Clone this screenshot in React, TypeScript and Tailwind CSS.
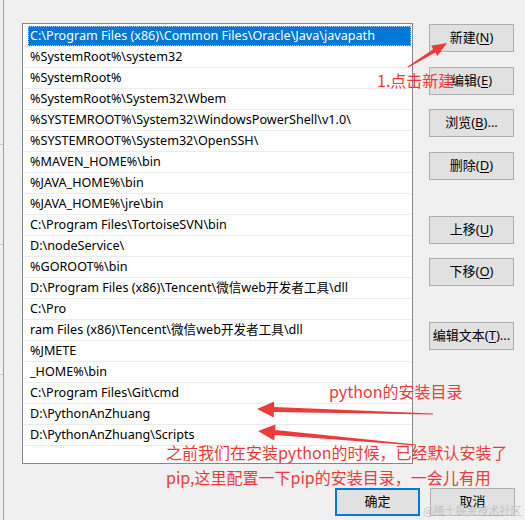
import React from "react";

const paths = [
  "C:\\Program Files (x86)\\Common Files\\Oracle\\Java\\javapath",
  "%SystemRoot%\\system32",
  "%SystemRoot%",
  "%SystemRoot%\\System32\\Wbem",
  "%SYSTEMROOT%\\System32\\WindowsPowerShell\\v1.0\\",
  "%SYSTEMROOT%\\System32\\OpenSSH\\",
  "%MAVEN_HOME%\\bin",
  "%JAVA_HOME%\\bin",
  "%JAVA_HOME%\\jre\\bin",
  "C:\\Program Files\\TortoiseSVN\\bin",
  "D:\\nodeService\\",
  "%GOROOT%\\bin",
  "D:\\Program Files (x86)\\Tencent\\微信web开发者工具\\dll",
  "C:\\Pro",
  "ram Files (x86)\\Tencent\\微信web开发者工具\\dll",
  "%JMETE",
  "_HOME%\\bin",
  "C:\\Program Files\\Git\\cmd",
  "D:\\PythonAnZhuang",
  "D:\\PythonAnZhuang\\Scripts",
];

type Btn = { label: string; key: string; tail?: string; mt: string };

const buttons: Btn[] = [
  { label: "新建", key: "N", mt: "mt-[1px]" },
  { label: "编辑", key: "E", mt: "mt-[15px]" },
  { label: "浏览", key: "B", tail: "...", mt: "mt-[14px]" },
  { label: "删除", key: "D", mt: "mt-[15px]" },
  { label: "上移", key: "U", mt: "mt-[36px]" },
  { label: "下移", key: "O", mt: "mt-[14px]" },
  { label: "编辑文本", key: "T", tail: "...", mt: "mt-[36px]" },
];

// tapered arrow polygon from tail to tip
function arrow(
  tx: number, ty: number, px: number, py: number,
  w0: number, w1: number, len: number, half: number
) {
  const dx = px - tx;
  const dy = py - ty;
  const l = Math.hypot(dx, dy);
  const ux = dx / l;
  const uy = dy / l;
  const nx = -uy;
  const ny = ux;
  const bx = px - ux * len;
  const by = py - uy * len;
  const pts = [
    [tx + (nx * w0) / 2, ty + (ny * w0) / 2],
    [bx + (nx * w1) / 2, by + (ny * w1) / 2],
    [bx + nx * half, by + ny * half],
    [px, py],
    [bx - nx * half, by - ny * half],
    [bx - (nx * w1) / 2, by - (ny * w1) / 2],
    [tx - (nx * w0) / 2, ty - (ny * w0) / 2],
  ];
  return pts.map((p) => p.map((v) => v.toFixed(1)).join(",")).join(" ");
}

const Button = ({ b }: { b: Btn }) => (
  <button className={`${b.mt} h-[28px] w-[85px] border border-[#adadad] bg-[#e1e1e1] text-[13px] text-black flex items-center justify-center`}>
    {b.label}(<span className="underline underline-offset-2">{b.key}</span>){b.tail}
  </button>
);

const App = () => {
  return (
    <div
      className="relative w-[525px] h-[520px] overflow-hidden bg-[#f0f0f0] flex"
      style={{ fontFamily: '"Noto Sans", "Noto Sans CJK SC", sans-serif' }}
    >
      {/* edge of the window behind */}
      <div className="w-[4px] h-full border-r border-[#a0a0a0] flex flex-col">
        <div className="h-[145px] border-b border-[#c8c8c8]" />
        <div className="h-[100px] border-b border-[#c8c8c8]" />
        <div className="h-[130px] border-b border-[#c8c8c8]" />
      </div>

      <div className="flex flex-col flex-1">
        <div className="flex pl-[18px] pt-[23px]">
          {/* path list */}
          <div className="w-[391px] h-[441px] border border-[#828790] bg-white pt-[2px]">
            {paths.map((p, i) => (
              <div key={i} className="h-[21px] border-b border-[#ececec] flex items-center">
                <div
                  className={
                    i === 0
                      ? "ml-[5px] w-[383px] h-[20px] pl-[2px] flex items-center bg-[#0078d7] text-white outline-1 outline-dotted outline-[#9ec9f0] -outline-offset-1 text-[12.6px] whitespace-nowrap"
                      : "ml-[5px] pl-[2px] text-[12.6px] text-black whitespace-nowrap"
                  }
                >
                  {p}
                </div>
              </div>
            ))}
          </div>

          {/* side buttons */}
          <div className="ml-[16px] flex flex-col">
            {buttons.map((b) => (
              <Button key={b.label} b={b} />
            ))}
          </div>
        </div>

        <div className="mt-[24px] flex justify-end gap-[10px] pr-[10px]">
          <button className="h-[28px] w-[85px] border-2 border-[#0078d7] bg-[#e1e1e1] text-[13px] text-black">
            确定
          </button>
          <button className="h-[28px] w-[85px] border border-[#adadad] bg-[#e1e1e1] text-[13px] text-black">
            取消
          </button>
        </div>
      </div>

      {/* red annotations */}
      <svg className="absolute left-0 top-0 pointer-events-none" width="525" height="520">
        <polygon points={arrow(408, 67, 447, 43, 1, 4, 15, 6)} fill="#ee3a3a" />
        <polygon points={arrow(433, 414, 257, 409, 1, 5, 17, 8)} fill="#ee3a3a" />
        <polygon points={arrow(416, 445, 258, 431, 1, 5, 17, 8)} fill="#ee3a3a" />
      </svg>

      <div
        className="absolute left-[377px] top-[70px] text-[16px] leading-[20px] text-[#ee3a3a] whitespace-nowrap"
        style={{ fontFamily: '"Noto Sans CJK SC", sans-serif' }}
      >
        1.点击新建
      </div>
      <div
        className="absolute left-[329px] top-[381px] text-[16px] leading-[20px] text-[#ee3a3a] whitespace-nowrap"
        style={{ fontFamily: '"Noto Sans CJK SC", sans-serif' }}
      >
        python的安装目录
      </div>
      <div
        className="absolute left-[166px] top-[440px] text-[16px] leading-[25px] text-[#ee3a3a] whitespace-nowrap"
        style={{ fontFamily: '"Noto Sans CJK SC", sans-serif' }}
      >
        <div>之前我们在安装python的时候，已经默认安装了</div>
        <div>pip,这里配置一下pip的安装目录，一会儿有用</div>
      </div>

      <div
        className="absolute left-[423px] top-[503px] text-[11px] leading-[14px] text-[#c4c4c4] whitespace-nowrap"
        style={{ fontFamily: '"Noto Sans CJK SC", sans-serif' }}
      >
        @稀土掘金技术社区
      </div>
    </div>
  );
};

export default App;
